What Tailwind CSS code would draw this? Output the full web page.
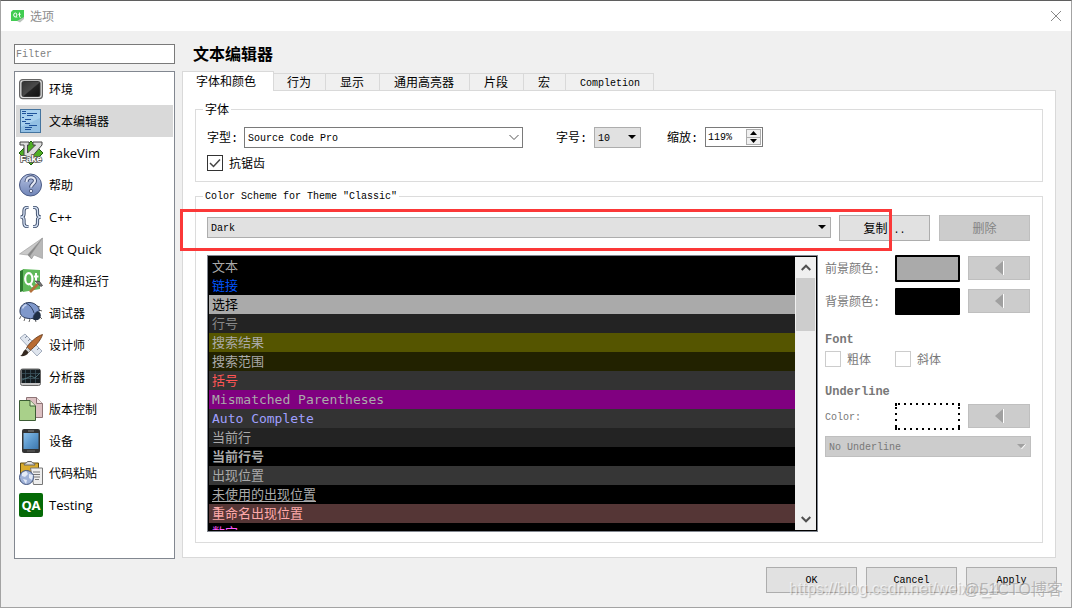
<!DOCTYPE html>
<html lang="zh-CN">
<head>
<meta charset="utf-8">
<title>选项</title>
<script src="https://cdn.jsdelivr.net/npm/@tailwindcss/browser@4"></script>
</head>
<body class="h-screen overflow-hidden bg-[#f0f0f0] font-['Liberation_Mono','Noto_Sans_CJK_SC',monospace] text-xs text-black">
<div class="relative flex h-full flex-col border border-[#a3a3a3] border-t-[#5f5f5f]">

  <header class="flex h-[30px] shrink-0 items-center bg-white pr-[9px] pl-[9px]">
    <svg class="h-[14px] w-[14px]" viewBox="0 0 14 14" aria-hidden="true">
      <path d="M3 1h11v8l-4 3H1V3z" fill="#41cd52"/>
      <path d="M14 8v2l-4 3.500-3-1.500z" fill="#b9c3bb"/>
      <ellipse cx="5.300" cy="6" rx="1.600" ry="2" fill="none" stroke="#fff"/><path d="M6 7.500l1 1.200M9.500 3.500v4c0 .7.500 1 1.200.8M8.300 5.300h2.400" stroke="#fff" fill="none"/>
    </svg>
    <h1 class="ml-[6px] flex-1 font-['Noto_Sans_CJK_SC',sans-serif] leading-[14px] text-[#8c8c8c]">选项</h1>
    <button aria-label="关闭" class="h-3 w-3"><svg class="h-3 w-3" viewBox="0 0 12 12"><path d="M1 1l10 10M11 1L1 11" stroke="#888" fill="none"/></svg></button>
  </header>

  <main class="flex min-h-0 flex-1 gap-[7px] pr-[15px] pl-[13px]">
    <aside class="flex w-[161px] shrink-0 flex-col gap-[7px] pt-[13px]">
      <input type="text" aria-label="Filter" placeholder="Filter" class="h-5 w-full border border-[#7a7a7a] bg-white px-px pt-px text-[10px] outline-none placeholder:text-[#808080]">
      <nav class="min-h-0 flex-1 border border-[#828790] bg-white p-px font-['Open_Sans','Noto_Sans_CJK_SC',sans-serif]">
        <ul class="[&_a]:flex [&_a]:h-8 [&_a]:items-center [&_a]:gap-[6px] [&_a]:pl-[3px] [&_span]:pt-[2px] [&_svg]:h-6 [&_svg]:w-6 [&_svg]:shrink-0">
          <li><a href="#env">
            <svg viewBox="0 0 24 24"><defs><linearGradient id="scr" x1="0" y1="0" x2="1" y2="1"><stop stop-color="#333"/><stop offset=".5" stop-color="#4a4a4a"/><stop offset=".55" stop-color="#222"/><stop offset="1" stop-color="#111"/></linearGradient></defs><rect x=".6" y="2.600" width="22.800" height="19" rx="3" fill="#dedede" stroke="#666" stroke-width="1.200"/><rect x="3" y="4.500" width="18" height="15" rx="1.500" fill="url(#scr)" stroke="#333"/></svg>
            <span>环境</span></a></li>
          <li><a href="#editor" aria-current="page" class="bg-[#d9d9d9]">
            <svg viewBox="0 0 24 24"><rect x="1.500" y=".5" width="20" height="23" fill="#93c0e4" stroke="#44749f"/><path d="M2 1h19v8L2 18z" fill="#a8d0ee"/><path d="M3 2.500h4M3 4.500h4M8 4.500h10M8 6.500h6M3 8.500h2M6 10.500h6M3 12.500h4M6 14.500h5M10 16.500h8M6 18.500h7M6 20.500h6" stroke="#1f529a"/></svg>
            <span>文本编辑器</span></a></li>
          <li><a href="#fakevim">
            <svg viewBox="0 0 24 24"><path d="M12 0l12 12-12 12L0 12z" fill="#4fae24" stroke="#1d5c10"/><path d="M1 1h9v3H8.500v8l8-8H14V1h9v3L11 18H5V4H1z" fill="#ddd" stroke="#444"/><text x="12" y="21" text-anchor="middle" font-size="9.500" font-weight="700" font-family="Liberation Sans,sans-serif" fill="#fff" stroke="#555" stroke-width="1.500" paint-order="stroke">Fake</text></svg>
            <span class="text-[13px]">FakeVim</span></a></li>
          <li><a href="#help">
            <svg viewBox="0 0 24 24"><defs><linearGradient id="hlp" x1="0" y1="0" x2="0" y2="1"><stop stop-color="#b4c0e0"/><stop offset="1" stop-color="#7085b8"/></linearGradient></defs><circle cx="11.500" cy="12" r="11" fill="url(#hlp)" stroke="#4a5a84"/><path d="M7.500 9c0-6 8.500-6 8.500-1.300 0 3-4 3.300-4 6.800" fill="none" stroke="#3c4a70" stroke-width="4"/><path d="M7.500 9c0-6 8.500-6 8.500-1.300 0 3-4 3.300-4 6.800" fill="none" stroke="#e4e8f4" stroke-width="2.200"/><circle cx="12" cy="18" r="1.700" fill="#e4e8f4" stroke="#3c4a70" stroke-width=".8"/></svg>
            <span>帮助</span></a></li>
          <li><a href="#cpp">
            <svg viewBox="0 0 24 24" fill="none"><g stroke="#364664" stroke-width="3.200"><path d="M9.500 2.500H8C5.500 2.500 5 4 5 6v3c0 2-1 3-3.500 3 2.500 0 3.500 1 3.500 3v3c0 2 .5 3.500 3 3.500h1.500M14 2.500h1.500c2.500 0 3 1.500 3 3.500v3c0 2 1 3 3.500 3-2.500 0-3.500 1-3.500 3v3c0 2-.5 3.500-3 3.500H14"/></g><g stroke="#d3dff2" stroke-width="1.400"><path d="M9.500 2.500H8C5.500 2.500 5 4 5 6v3c0 2-1 3-3.500 3 2.500 0 3.500 1 3.500 3v3c0 2 .5 3.500 3 3.500h1.500M14 2.500h1.500c2.500 0 3 1.500 3 3.500v3c0 2 1 3 3.500 3-2.500 0-3.500 1-3.500 3v3c0 2-.5 3.500-3 3.500H14"/></g></svg>
            <span class="text-[13px]">C++</span></a></li>
          <li><a href="#quick">
            <svg viewBox="0 0 24 24"><path d="M23.500 1L.5 17l8 1z" fill="#c9c9c9" stroke="#999" stroke-width=".6"/><path d="M23.500 1l-15 17 4 4z" fill="#888"/><path d="M23.500 1v20.500L15 18l-2.500 4L11 19z" fill="#b8b8b8" stroke="#999" stroke-width=".6"/></svg>
            <span class="text-[13px]">Qt Quick</span></a></li>
          <li><a href="#build">
            <svg viewBox="0 0 24 24"><path d="M1 2l4-2v22l-4 1z" fill="#2b7a2e"/><path d="M4 0l17 1v19L4 23z" fill="#5fb95a"/><ellipse cx="9.800" cy="9.800" rx="3.600" ry="5.600" fill="none" stroke="#fff" stroke-width="2.200"/><path d="M10.500 14l3 4M17 4v8c0 2 .8 2.500 2 2.200M14.800 7.500h4.700" fill="none" stroke="#fff" stroke-width="2"/><path d="M11 23l8-8" stroke="#b4703c" stroke-width="2.600"/><path d="M16 12l6 5.500 1.500-1-3-4z" fill="#777" stroke="#333" stroke-width=".7"/></svg>
            <span>构建和运行</span></a></li>
          <li><a href="#debug">
            <svg viewBox="0 0 24 24"><path d="M2 15l-1.500 3M6 17l-1 3M11 18l-1 3M18 5l3 1M20 9l3 1M21 16l2 2M16 18l1 3" stroke="#666" fill="none"/><circle cx="17" cy="14.500" r="4.800" fill="#1f2e44"/><path d="M1 11C.5 5 5 1.500 10 1.500c6 0 10 4 10.500 8.500-3 0-6 3-6.500 7.500C7 18 1.500 16 1 11z" fill="#7f98cb" stroke="#2f3f60"/><path d="M7 2c4 2 7 6 8 10" stroke="#2f3f60" fill="none"/><path d="M3.500 7.500c1-2.500 2.500-3.500 4-3.500" stroke="#c6d3f0" stroke-width="1.500" fill="none"/></svg>
            <span>调试器</span></a></li>
          <li><a href="#designer">
            <svg viewBox="0 0 24 24"><path d="M1 5l5-4 17 17-5 5z" fill="#dfe5ee" stroke="#a3adbd"/><path d="M8 3l-2 2M11 6l-2 2M14 9l-2 2M17 12l-2 2M20 15l-2 2" stroke="#68758c" stroke-width=".8"/><path d="M23.500 1.500C18 3 10 10 7.500 15l3 3C16 14 22 7 23.500 1.500z" fill="#b86a30" stroke="#5e3415" stroke-width=".8"/><path d="M8.500 14.500l3 3-2 2-3-3z" fill="#ccc" stroke="#444" stroke-width=".5"/><path d="M6.500 16.500l3 3C8 23 4 23.500 1 23c3-1 2.500-5 5.500-6.500z" fill="#332820"/></svg>
            <span>设计师</span></a></li>
          <li><a href="#analyzer">
            <svg viewBox="0 0 24 24"><rect x="1.500" y="4" width="20" height="16.500" rx="2" fill="#c4c4c4" stroke="#666"/><path d="M2.500 4.500h18.500V18H2.500z" fill="#141c20"/><path d="M6.500 5v13M11.500 5v13M16.500 5v13M3 8.500h17M3 13.500h17" stroke="#39515a" stroke-width=".8"/><path d="M3 15l5-2 4-2 4 2 5-5" stroke="#5b8891" fill="none" stroke-width=".7"/></svg>
            <span>分析器</span></a></li>
          <li><a href="#vcs">
            <svg viewBox="0 0 24 24"><path d="M7.500 .5h10l6 6v14h-16z" fill="#dcc0c2" stroke="#8d7476"/><path d="M17.500 .5v6h6" fill="#f2e5e5" stroke="#8d7476"/><path d="M.5 3.500h10.500l5.500 5.500v14.500H.5z" fill="#a9d08a" stroke="#3c5c34"/><path d="M11 3.500V9h5.500" fill="#dcf0cc" stroke="#3c5c34"/></svg>
            <span>版本控制</span></a></li>
          <li><a href="#devices">
            <svg viewBox="0 0 24 24"><defs><linearGradient id="ph" x1="0" y1="0" x2="1" y2="1"><stop stop-color="#8cc0ea"/><stop offset=".5" stop-color="#5d99cd"/><stop offset="1" stop-color="#3d77ad"/></linearGradient></defs><rect x="3" y="0" width="18" height="24" rx="2" fill="#333"/><rect x="4.500" y="4" width="15" height="16" fill="url(#ph)"/><path d="M9 2h6" stroke="#888"/><path d="M8 22h8" stroke="#666"/></svg>
            <span>设备</span></a></li>
          <li><a href="#paste">
            <svg viewBox="0 0 24 24"><path d="M1.500 2h18v18h-18z" fill="#d9ab2e" stroke="#5e4a10"/><path d="M5 4c0-2 3-1.500 3.500-3.500h4C13 2.500 16 2 16 4z" fill="#ddd" stroke="#666"/><path d="M11.500 7h12v16.500h-9z" fill="#eee" stroke="#777"/><path d="M14 11h7M14 13.500h7M15 16h6M16 18.500h4" stroke="#777" stroke-width="1"/><circle cx="7.500" cy="16.500" r="7" fill="#9fb2d8" stroke="#41547e"/><path d="M3 12l4-2 2 3-3 3-3-1zM10 13l4 1-1 5-3-2zM4 18l4 1-1 4z" fill="#e3eaf7"/></svg>
            <span>代码粘贴</span></a></li>
          <li><a href="#testing">
            <svg viewBox="0 0 24 24"><rect width="24" height="24" rx="2" fill="#046a06"/><text x="12" y="17" text-anchor="middle" font-size="13" font-weight="700" font-family="Noto Sans,sans-serif" fill="#fff">QA</text></svg>
            <span class="text-[13px]">Testing</span></a></li>
        </ul>
      </nav>
    </aside>

    <section class="flex min-w-0 flex-1 flex-col pt-[13px] pb-px">
      <h2 class="h-[27px] shrink-0 pl-[11px] text-base leading-6 font-bold">文本编辑器</h2>
      <div role="tablist" class="relative -mb-px flex h-5 shrink-0 items-end leading-[14px]">
        <button role="tab" aria-selected="true" class="h-5 w-[92px] border border-b-0 border-[#d9d9d9] bg-white pt-[3px] pr-1">字体和颜色</button>
        <button role="tab" class="h-[18px] border border-l-0 border-[#d9d9d9] pt-[3px] pr-[14px] pl-[13px]">行为</button>
        <button role="tab" class="h-[18px] border border-l-0 border-[#d9d9d9] pt-[3px] pr-[15px] pl-[14px]">显示</button>
        <button role="tab" class="h-[18px] border border-l-0 border-[#d9d9d9] pt-[3px] pr-[15px] pl-[14px]">通用高亮器</button>
        <button role="tab" class="h-[18px] border border-l-0 border-[#d9d9d9] pt-[3px] pr-[15px] pl-[14px]">片段</button>
        <button role="tab" class="h-[18px] border border-l-0 border-[#d9d9d9] pt-[3px] pr-[15px] pl-[14px]">宏</button>
        <button role="tab" class="h-[18px] border border-l-0 border-[#d9d9d9] pt-[3px] pr-[13px] pl-[14px] text-[10px]">Completion</button>
      </div>

      <div role="tabpanel" class="flex min-h-0 flex-1 flex-col gap-[5px] border border-[#d9d9d9] bg-white px-3 pt-[9px] pb-[14px]">
        <fieldset class="shrink-0 border border-[#dcdcdc] px-[11px] pb-[10px]">
          <legend class="-ml-1 px-[2px] pt-1 leading-[14px]">字体</legend>
          <div class="flex h-[30px] items-end">
            <label for="family" class="h-[21px] w-[37px] leading-6">字型:</label>
            <div class="relative w-[279px]">
              <select id="family" class="block h-[21px] w-full appearance-none border border-[#7a7a7a] bg-white pt-[2px] pl-[3px] text-[10px]"><option>Source Code Pro</option></select>
              <svg class="pointer-events-none absolute top-[7px] right-1 h-[7px] w-[10px]" viewBox="0 0 10 7"><path d="M.5 1L5 5.500 9.500 1" fill="none" stroke="#555"/></svg>
            </div>
            <label for="size" class="ml-[33px] h-[21px] w-[38px] leading-6">字号:</label>
            <div class="relative w-[47px]">
              <select id="size" class="block h-[21px] w-full appearance-none border border-[#adadad] bg-[#e1e1e1] pt-[2px] pl-[3px] text-[10px]"><option>10</option></select>
              <svg class="pointer-events-none absolute top-2 right-[5px] h-1 w-2" viewBox="0 0 8 4"><path d="M0 0h8L4 4z"/></svg>
            </div>
            <label for="zoom" class="ml-[26px] h-[21px] w-[38px] leading-6">缩放:</label>
            <div class="mb-px flex h-5 w-[58px] border border-[#7a7a7a] bg-white p-px">
              <input id="zoom" type="text" role="spinbutton" aria-valuenow="119" value="119%" class="min-w-0 flex-1 pt-[2px] pl-px text-[10px] outline-none">
              <div class="flex w-[15px] flex-col">
                <button aria-label="增大" class="flex flex-1 items-center justify-center border border-[#adadad] bg-[#f0f0f0]"><svg class="h-1 w-[7px]" viewBox="0 0 7 4"><path d="M0 4h7L3.500 0z"/></svg></button>
                <button aria-label="减小" class="flex flex-1 items-center justify-center border border-t-0 border-[#adadad] bg-[#f0f0f0]"><svg class="h-1 w-[7px]" viewBox="0 0 7 4"><path d="M0 0h7L3.500 4z"/></svg></button>
              </div>
            </div>
          </div>
          <label class="mt-[7px] flex h-4 gap-[6px] leading-5">
            <span class="relative h-4 w-4"><input type="checkbox" checked class="block h-4 w-4 appearance-none border border-[#333] bg-white"><svg class="pointer-events-none absolute inset-0 h-4 w-4" viewBox="0 0 16 16"><path d="M3 8l3.500 3.500L13 4.500" fill="none" stroke="#444" stroke-width="1.500"/></svg></span>
            抗锯齿
          </label>
        </fieldset>

        <fieldset class="flex min-h-0 flex-1 flex-col border border-[#dcdcdc] px-[11px] pb-[10px]">
          <legend class="-ml-1 px-[2px] pt-[2px] text-[10px] leading-4">Color Scheme for Theme "Classic"</legend>
          <div class="flex h-9 shrink-0 items-end pr-px">
            <div class="relative mr-2 mb-[3px] flex-1">
              <select aria-label="Color Scheme" class="block h-[21px] w-full appearance-none border border-[#adadad] bg-[#e1e1e1] pt-[2px] pl-[3px] text-[10px]"><option>Dark</option></select>
              <svg class="pointer-events-none absolute top-2 right-[5px] h-1 w-2" viewBox="0 0 8 4"><path d="M0 0h8L4 4z"/></svg>
            </div>
            <button class="mr-[9px] h-[26px] w-[91px] border border-[#adadad] bg-[#e1e1e1] pt-[3px]">复制<span class="text-[10px]">...</span></button>
            <button disabled class="h-[26px] w-[91px] border border-[#bfbfbf] bg-[#cccccc] pt-[3px] text-[#838383]">删除</button>
          </div>

          <div class="mt-[14px] flex min-h-0 flex-1 gap-[7px]">
            <div class="flex min-w-0 flex-1 border border-[#828790] bg-black p-px">
              <ul class="min-w-0 flex-1 overflow-hidden font-['DejaVu_Sans_Mono','Noto_Sans_CJK_SC',monospace] text-[13px] text-[#aaaaaa] [&>li]:h-[19px] [&>li]:pl-[3px] [&>li]:leading-[19px]">
                <li>文本</li>
                <li class="text-[#0055ff]">链接</li>
                <li class="bg-[#aaaaaa] text-black">选择</li>
                <li class="bg-[#232323] text-[#888888]">行号</li>
                <li class="bg-[#555500]">搜索结果</li>
                <li class="bg-[#222200]">搜索范围</li>
                <li class="bg-[#333333] text-[#ff5555]">括号</li>
                <li class="bg-[#800080]">Mismatched Parentheses</li>
                <li class="bg-[#333333] text-[#a0a0ff]">Auto Complete</li>
                <li class="bg-[#232323]">当前行</li>
                <li class="font-bold">当前行号</li>
                <li class="bg-[#363636]">出现位置</li>
                <li class="underline underline-offset-2">未使用的出现位置</li>
                <li class="bg-[#553636] text-[#ffaaaa]">重命名出现位置</li>
                <li class="text-[#ff55ff]">数字</li>
              </ul>
              <div class="flex w-[21px] flex-col bg-[#f0f0f0] px-px">
                <button aria-label="向上滚动" class="flex h-[21px] items-center justify-center"><svg class="h-[7px] w-[10px]" viewBox="0 0 10 7"><path d="M.7 6L5 1.700 9.300 6" fill="none" stroke="#505050" stroke-width="2"/></svg></button>
                <div class="h-[53px] bg-[#cdcdcd]"></div>
                <button aria-label="向下滚动" class="mt-auto flex h-[21px] items-center justify-center"><svg class="h-[7px] w-[10px]" viewBox="0 0 10 7"><path d="M.7 1L5 5.300 9.300 1" fill="none" stroke="#505050" stroke-width="2"/></svg></button>
              </div>
            </div>

            <div class="flex w-[206px] shrink-0 flex-col text-[#787878]">
              <div class="flex h-[27px] items-center">
                <span class="w-[70px] pt-[3px]">前景颜色:</span>
                <button disabled aria-label="前景颜色" class="mr-2 h-[27px] w-[65px] rounded-[1px] border-2 border-black bg-[#aaaaaa]"></button>
                <button disabled aria-label="清除前景颜色" class="mb-px flex h-6 w-[62px] items-center justify-center border border-[#bfbfbf] bg-[#cccccc]"><svg class="h-4 w-[10px]" viewBox="0 0 10 16"><path d="M9.500 1v14" stroke="#fff"/><path d="M9 1v14L1 8z" fill="#a0a0a0"/></svg></button>
              </div>
              <div class="mt-[6px] flex h-[27px] items-center">
                <span class="w-[70px] pt-[3px]">背景颜色:</span>
                <button disabled aria-label="背景颜色" class="mr-2 h-[27px] w-[65px] rounded-[1px] bg-black"></button>
                <button disabled aria-label="清除背景颜色" class="mb-px flex h-6 w-[62px] items-center justify-center border border-[#bfbfbf] bg-[#cccccc]"><svg class="h-4 w-[10px]" viewBox="0 0 10 16"><path d="M9.500 1v14" stroke="#fff"/><path d="M9 1v14L1 8z" fill="#a0a0a0"/></svg></button>
              </div>
              <h3 class="mt-4 h-4 leading-[18px] font-bold">Font</h3>
              <div class="mt-1 flex h-4 leading-5">
                <label class="flex w-[70px] gap-[6px]"><input type="checkbox" disabled class="h-4 w-4 appearance-none border border-[#cccccc] bg-white">粗体</label>
                <label class="flex gap-[6px]"><input type="checkbox" disabled class="h-4 w-4 appearance-none border border-[#cccccc] bg-white">斜体</label>
              </div>
              <h3 class="mt-4 h-4 leading-[18px] font-bold">Underline</h3>
              <div class="mt-1 flex h-[27px] items-center">
                <span class="w-[70px] pt-[2px] text-[10px]">Color:</span>
                <button disabled aria-label="Underline Color" class="mr-2 h-[27px] w-[65px]"><svg class="h-[27px] w-[65px]" viewBox="0 0 65 27"><path d="M3 1h59M3 26h59" stroke="#000" stroke-width="2" stroke-dasharray="2 4"/><path d="M1 3v21M64 3v21" stroke="#000" stroke-width="2" stroke-dasharray="2 4" stroke-dashoffset="-1"/><path d="M0 0h2v3H0zM63 0h2v3h-2zM0 24h2v3H0zM63 24h2v3h-2z"/></svg></button>
                <button disabled aria-label="清除下划线颜色" class="mb-px flex h-6 w-[62px] items-center justify-center border border-[#bfbfbf] bg-[#cccccc]"><svg class="h-4 w-[10px]" viewBox="0 0 10 16"><path d="M9.500 1v14" stroke="#fff"/><path d="M9 1v14L1 8z" fill="#a0a0a0"/></svg></button>
              </div>
              <div class="relative mt-[6px]">
                <select disabled aria-label="Underline style" class="block h-[21px] w-full appearance-none border border-[#bfbfbf] bg-[#cccccc] pt-[2px] pl-[3px] text-[10px] text-[#787878] opacity-100"><option>No Underline</option></select>
                <svg class="pointer-events-none absolute top-2 right-[5px] h-[5px] w-[9px]" viewBox="0 0 9 5"><path d="M8.500 .5L4.500 5" stroke="#fff"/><path d="M0 0h8L4 4z" fill="#a0a0a0"/></svg>
              </div>
            </div>
          </div>
        </fieldset>
      </div>
    </section>
  </main>

  <footer class="flex shrink-0 justify-end gap-[9px] pt-2 pr-[14px] pb-[14px] text-[10px]">
    <button class="h-[26px] w-[91px] border border-[#adadad] bg-[#e1e1e1] pt-[2px]">OK</button>
    <button class="h-[26px] w-[91px] border border-[#adadad] bg-[#e1e1e1] pt-[2px]">Cancel</button>
    <button class="h-[26px] w-[91px] border border-[#adadad] bg-[#e1e1e1] pt-[2px]">Apply</button>
  </footer>

  <div class="pointer-events-none absolute top-[208px] right-[179px] left-[179px] h-[42px] border-[3px] border-[#fb3838]"></div>
  <div class="pointer-events-none absolute right-[72px] bottom-2 font-['Liberation_Sans',sans-serif] text-base leading-5 text-white/60 [text-shadow:1px_1px_1px_#00000040]">https://blog.csdn.net/weixin_4</div>
  <div class="pointer-events-none absolute right-2 bottom-[7px] font-['Liberation_Sans','Noto_Sans_CJK_SC',sans-serif] text-base leading-5 text-[#a0a0a0]/70 [text-shadow:1px_1px_0_#ffffff80]">@51CTO博客</div>
</div>
</body>
</html>
